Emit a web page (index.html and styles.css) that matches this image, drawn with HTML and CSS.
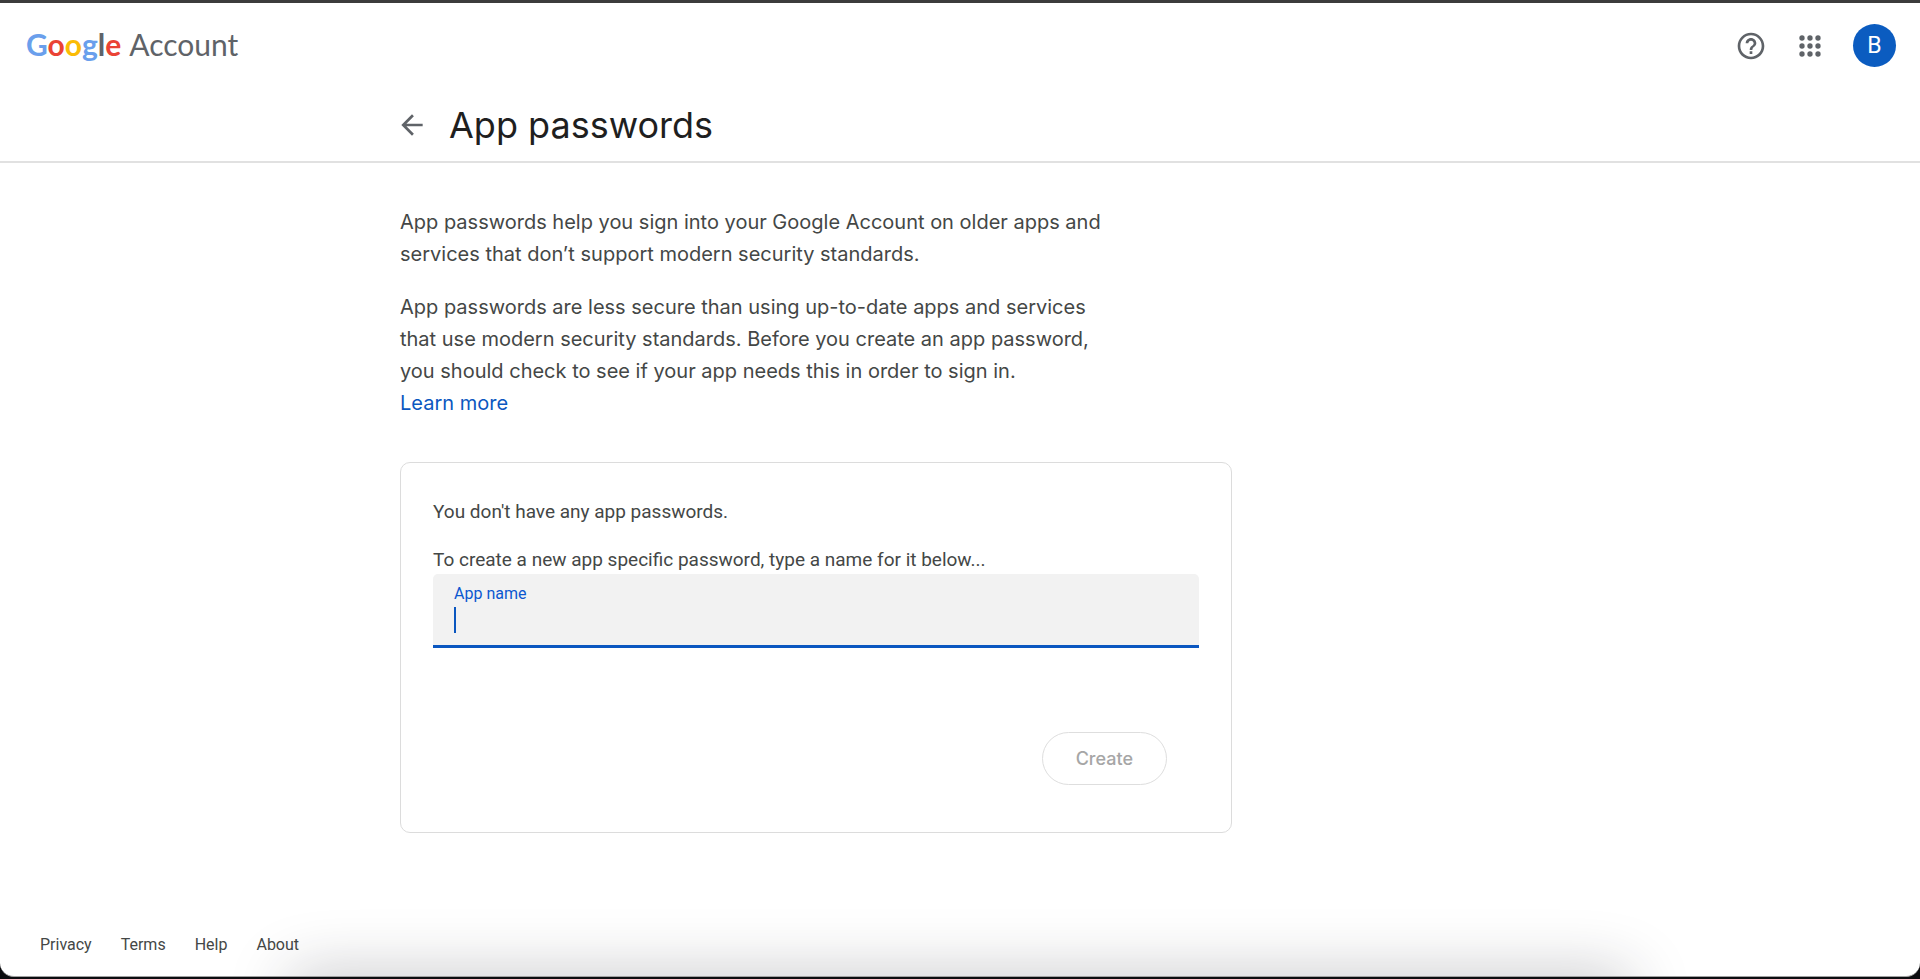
FILE: index.html
```
<!DOCTYPE html>
<html lang="en">
<head>
    <meta charset="UTF-8">
    <meta name="viewport" content="width=device-width, initial-scale=1.0">
    <title>App passwords</title>
    <link rel="stylesheet" href="styles.css">
</head>
<body>
    <div class="window">
        <header class="topbar">
            <a class="brand" href="#">
                <span class="google"><span class="blue">G</span><span class="red">o</span><span class="yellow">o</span><span class="blue">g</span><span class="grey">l</span><span class="red">e</span></span>
                <span class="product">Account</span>
            </a>
            <div class="actions">
                <button class="icon-button" type="button" aria-label="Help">
                    <svg width="32" height="32" viewBox="0 0 24 24" fill="currentColor">
                        <path d="M11 18h2v-2h-2v2zm1-16C6.48 2 2 6.48 2 12s4.48 10 10 10 10-4.48 10-10S17.520 2 12 2zm0 18c-4.410 0-8-3.590-8-8s3.590-8 8-8 8 3.590 8 8-3.590 8-8 8zm0-14c-2.210 0-4 1.790-4 4h2c0-1.100.9-2 2-2s2 .9 2 2c0 2-3 1.750-3 5h2c0-2.250 3-2.500 3-5 0-2.210-1.790-4-4-4z"/>
                    </svg>
                </button>
                <button class="icon-button" type="button" aria-label="Google apps">
                    <svg width="32" height="32" viewBox="0 0 24 24" fill="currentColor">
                        <circle cx="6" cy="6" r="2"/><circle cx="12" cy="6" r="2"/><circle cx="18" cy="6" r="2"/>
                        <circle cx="6" cy="12" r="2"/><circle cx="12" cy="12" r="2"/><circle cx="18" cy="12" r="2"/>
                        <circle cx="6" cy="18" r="2"/><circle cx="12" cy="18" r="2"/><circle cx="18" cy="18" r="2"/>
                    </svg>
                </button>
                <button class="avatar" type="button">B</button>
            </div>
        </header>

        <div class="title-row">
            <a class="back" href="#" aria-label="Back">
                <svg width="32" height="32" viewBox="0 0 24 24" fill="currentColor">
                    <path d="M20 11H7.830l5.590-5.590L12 4l-8 8 8 8 1.410-1.410L7.830 13H20v-2z"/>
                </svg>
            </a>
            <h1>App passwords</h1>
        </div>

        <main class="content">
            <div class="intro">
                <p>App passwords help you sign into your Google Account on older apps and<br> services that don’t support modern security standards.</p>
                <p>App passwords are less secure than using up-to-date apps and services<br> that use modern security standards. Before you create an app password,<br> you should check to see if your app needs this in order to sign in.<br> <a href="#">Learn more</a></p>
            </div>

            <form class="card">
                <p>You don't have any app passwords.</p>
                <p>To create a new app specific password, type a name for it below...</p>
                <div class="field">
                    <label for="app-name">App name</label>
                    <div class="entry">
                        <span class="caret"></span>
                        <input type="text" id="app-name">
                    </div>
                </div>
                <div class="card-actions">
                    <button class="create" type="button" disabled>Create</button>
                </div>
            </form>
        </main>

        <footer class="footer">
            <a href="#">Privacy</a>
            <a href="#">Terms</a>
            <a href="#">Help</a>
            <a href="#">About</a>
        </footer>
        <div class="dock-shadow"></div>
    </div>
</body>
</html>
```
FILE: styles.css
```
* {
    box-sizing: border-box;
}
body {
    margin: 0;
    padding-bottom: 2px;
    background: #0b0c0f;
    color: #444746;
    font-family: Inter, "Liberation Sans", sans-serif;
}
a {
    color: inherit;
    text-decoration: none;
}
p {
    margin: 0;
}
.window {
    position: relative;
    display: flex;
    flex-direction: column;
    min-height: calc(100vh - 2px);
    overflow: hidden;
    background: #fff;
    border-top: 3px solid #3c3c3c;
    border-bottom: 1px solid #a0a0a0;
    border-radius: 0 0 14px 14px;
}

/* Top bar */
.topbar {
    display: flex;
    align-items: center;
    justify-content: space-between;
    height: 85px;
    padding: 0 24px 0 26px;
}
.brand {
    display: flex;
    align-items: baseline;
    gap: 8px;
    padding-bottom: 3px;
    color: #5f6368;
    font-family: Lato, sans-serif;
    font-size: 30px;
}
.google {
    font-weight: 700;
}
.blue {
    color: #6a9fec;
}
.red {
    color: #ea4335;
}
.yellow {
    color: #fbbc05;
}
.grey {
    color: #5f6368;
}
.actions {
    display: flex;
    align-items: center;
}
.icon-button {
    display: flex;
    margin-right: 27px;
    padding: 0;
    border: 0;
    background: none;
    color: #5f6368;
}
.avatar {
    width: 43px;
    height: 43px;
    padding: 0;
    border: 0;
    border-radius: 50%;
    background: #0b5cc0;
    color: #fff;
    font-family: Roboto, sans-serif;
    font-size: 23px;
}

/* Page title */
.title-row {
    display: flex;
    align-items: center;
    gap: 21px;
    height: 75px;
    padding: 0 396px 0 396px;
    border-bottom: 2px solid #e1e1e1;
}
.back {
    display: flex;
    color: #5f6368;
}
h1 {
    margin: 0;
    color: #1f1f1f;
    font-size: 36px;
    font-weight: 400;
}

/* Content */
.content {
    flex: 1;
    width: 100%;
    max-width: 1232px;
    padding: 43px 0 56px 400px;
}
.intro {
    font-size: 20px;
    line-height: 32px;
}
.intro p {
    margin-bottom: 21px;
}
.intro a {
    color: #0b57c0;
}
.card {
    margin-top: 43px;
    padding: 35px 32px 47px;
    border: 1px solid #dcdcdc;
    border-radius: 10px;
    font-family: Roboto, sans-serif;
    font-size: 19px;
    line-height: 28px;
}
.card p {
    margin-bottom: 20px;
}
.card p + p {
    margin-bottom: 0;
}
.field {
    padding: 10px 21px 8px;
    height: 74px;
    border-bottom: 3px solid #0b57c0;
    border-radius: 5px 5px 0 0;
    background: #f2f2f2;
}
.field label {
    display: block;
    color: #0b57d0;
    font-size: 16px;
    line-height: 20px;
}
.entry {
    display: flex;
    align-items: center;
    margin-top: 3px;
}
.caret {
    width: 2px;
    height: 26px;
    background: #0b57c0;
}
.entry input {
    flex: 1;
    padding: 0;
    border: 0;
    outline: 0;
    background: none;
    font: inherit;
    line-height: 26px;
}
.card-actions {
    display: flex;
    justify-content: flex-end;
    padding: 84px 32px 0 0;
}
.create {
    padding: 0 33px;
    height: 53px;
    border: 1px solid #dedede;
    border-radius: 27px;
    background: #fff;
    color: #a6a6a6;
    font-family: Inter, sans-serif;
    font-size: 18px;
    font-weight: 500;
}

/* Footer */
.footer {
    display: flex;
    gap: 29px;
    padding: 0 40px 19px;
    font-family: Roboto, sans-serif;
    font-size: 16px;
    line-height: 24px;
}
.dock-shadow {
    position: absolute;
    right: 290px;
    bottom: -40px;
    left: 290px;
    height: 40px;
    border-radius: 30px;
    box-shadow: 0 0 60px 4px rgba(30, 30, 45, 0.25);
    pointer-events: none;
}
```
